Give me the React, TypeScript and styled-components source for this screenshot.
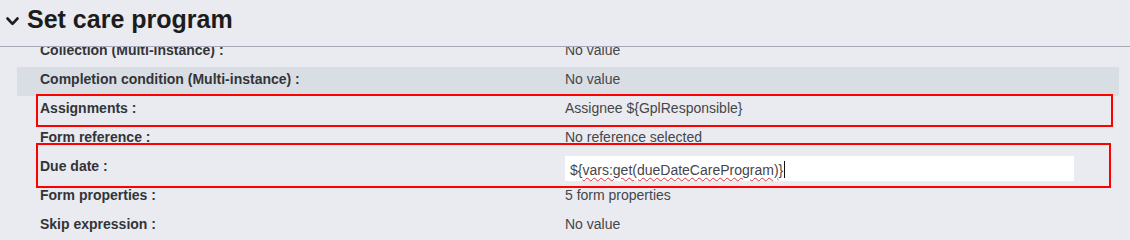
import React, { useLayoutEffect, useRef } from 'react'
import styled, { createGlobalStyle } from 'styled-components'

const GlobalStyle = createGlobalStyle`
  html, body {
    margin: 0;
    padding: 0;
    background: #e9ebf0;
    font-family: 'Liberation Sans', Arial, sans-serif;
  }
`

const Panel = styled.div`
  width: 1130px;
  height: 239px;
  display: flex;
  flex-direction: column;
  background: #e9ebf0;
  overflow: hidden;
`

const Header = styled.div`
  height: 47px;
  box-sizing: border-box;
  padding: 5px 0 0 6px;
  display: flex;
  align-items: flex-start;
  gap: 8px;
  border-bottom: 1px solid #a4a9b5;
  flex-shrink: 0;
`

const Chevron = styled.svg`
  width: 13px;
  height: 9px;
  margin-top: 12px;
  flex-shrink: 0;
`

const Title = styled.h2`
  margin: 0;
  font-size: 25px;
  font-weight: 700;
  line-height: 29px;
  color: #1c1c1c;
`

const Body = styled.div`
  flex: 1;
  overflow: hidden;
`

const List = styled.div`
  display: flex;
  flex-direction: column;
  padding: 0 11px 20px 17px;
`

const Row = styled.div<{ $shaded?: boolean }>`
  position: relative;
  height: 29px;
  display: grid;
  grid-template-columns: 525px 1fr;
  padding-left: 23px;
  background: ${({ $shaded }) => ($shaded ? '#d9dee5' : 'transparent')};
  font-size: 14px;
  line-height: 16px;
`

const Label = styled.div`
  padding-top: 4px;
  font-weight: 700;
  color: #333438;
`

const Value = styled.div`
  padding-top: 4px;
  color: #45464a;
`

const InputCell = styled.div`
  padding-top: 2px;
`

const FakeInput = styled.div`
  width: 509px;
  height: 25px;
  box-sizing: border-box;
  padding: 5px 5px 0;
  background: #ffffff;
  color: #45464a;
  font-size: 14px;
  line-height: 16px;
  white-space: nowrap;
`

const Misspelled = styled.span`
  text-decoration: underline wavy #e03030;
  text-decoration-thickness: 1px;
  text-underline-offset: 2px;
`

const Caret = styled.span`
  display: inline-block;
  width: 1px;
  height: 17px;
  margin-left: 1px;
  vertical-align: -3px;
  background: #111;
`

const Highlight = styled.div<{ $top: number; $height: number; $width: number }>`
  position: absolute;
  left: 19px;
  top: ${({ $top }) => $top}px;
  width: ${({ $width }) => $width}px;
  height: ${({ $height }) => $height}px;
  box-sizing: border-box;
  border: 2px solid #ff0000;
  pointer-events: none;
`

const rows: { label: string; value: string; shaded?: boolean }[] = [
  { label: 'Collection (Multi-instance) :', value: 'No value' },
  { label: 'Completion condition (Multi-instance) :', value: 'No value', shaded: true },
  { label: 'Assignments :', value: 'Assignee ${GplResponsible}' },
  { label: 'Form reference :', value: 'No reference selected' },
  { label: 'Due date :', value: '' },
  { label: 'Form properties :', value: '5 form properties' },
  { label: 'Skip expression :', value: 'No value' },
]

const App: React.FC = () => {
  const bodyRef = useRef<HTMLDivElement>(null)

  useLayoutEffect(() => {
    if (bodyRef.current) bodyRef.current.scrollTop = 9
  }, [])

  return (
    <Panel>
      <GlobalStyle />
      <Header>
        <Chevron viewBox="0 0 13 9">
          <polyline points="1.5,1.5 6.5,6.8 11.5,1.5" fill="none" stroke="#1c1c1c" strokeWidth="2.6" strokeLinecap="round" strokeLinejoin="round" />
        </Chevron>
        <Title>Set care program</Title>
      </Header>
      <Body ref={bodyRef}>
        <List>
          {rows.map((r) => (
            <Row key={r.label} $shaded={r.shaded}>
              <Label>{r.label}</Label>
              {r.label === 'Due date :' ? (
                <InputCell>
                  <FakeInput>
                    {'${'}<Misspelled>vars:get(dueDateCareProgram)</Misspelled>{'}'}
                    <Caret />
                  </FakeInput>
                </InputCell>
              ) : (
                <Value>{r.value}</Value>
              )}
              {r.label === 'Assignments :' && <Highlight $top={-2} $height={33} $width={1077} />}
              {r.label === 'Due date :' && <Highlight $top={-11} $height={45} $width={1075} />}
            </Row>
          ))}
        </List>
      </Body>
    </Panel>
  )
}

export default App
